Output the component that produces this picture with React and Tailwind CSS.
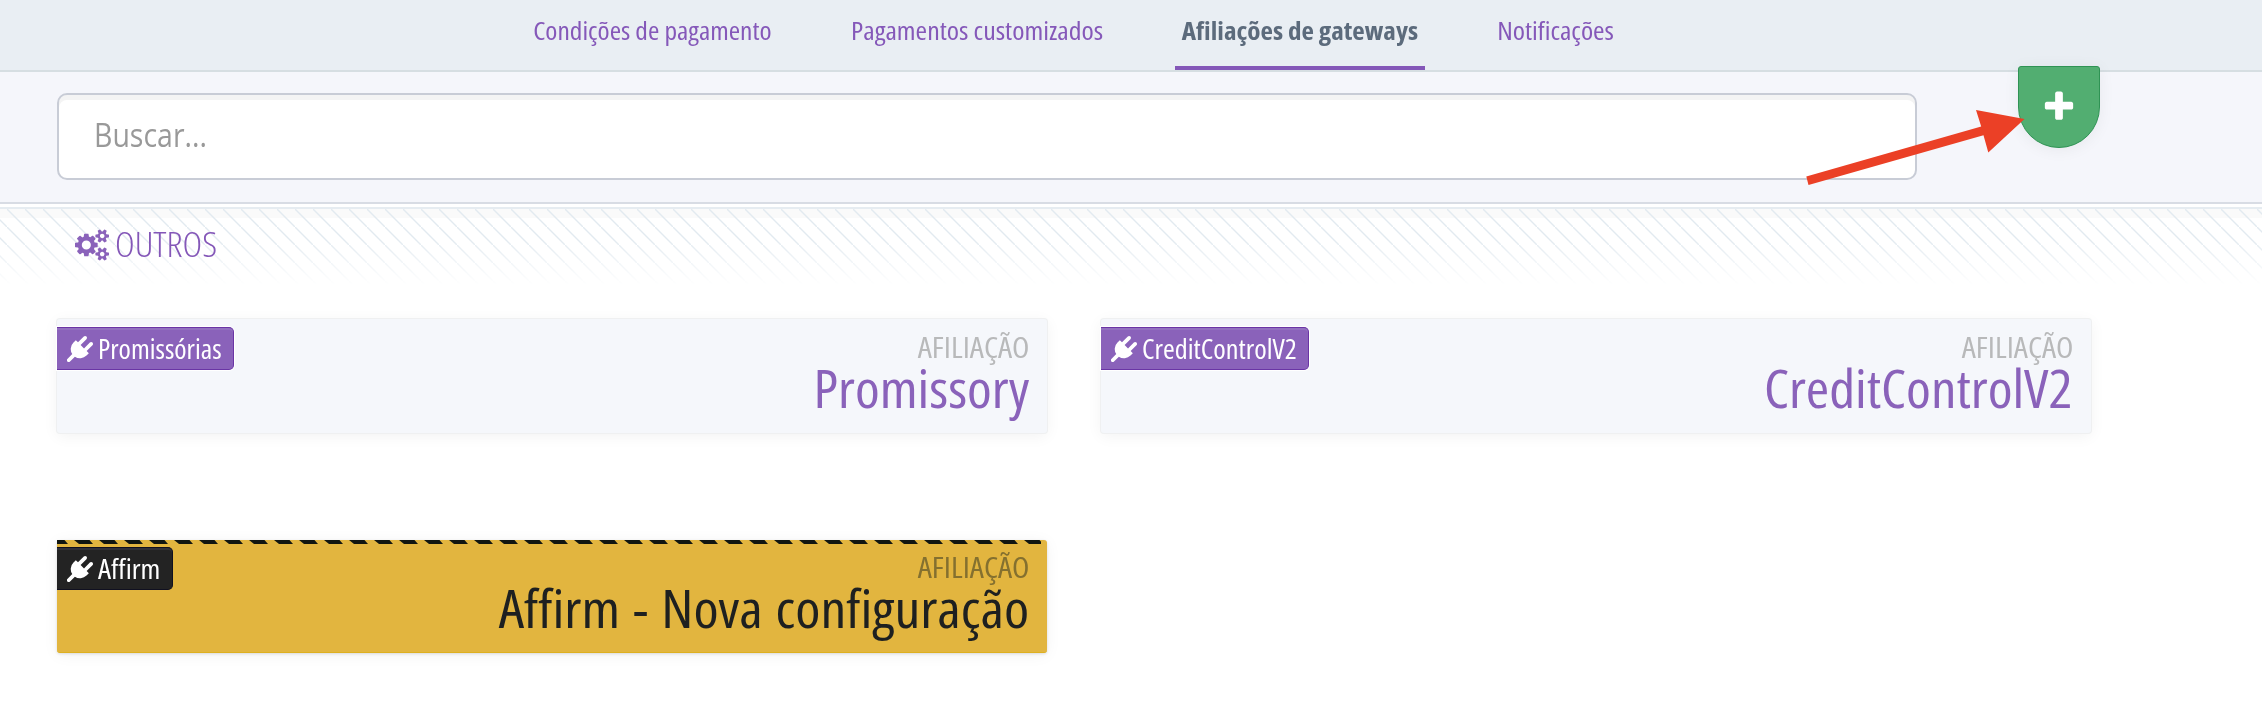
import React from "react";

const PLUG =
  "M1755 453q37 38 37 90.500t-37 90.500l-401 400 150 150-160 160q-163 163-389.500 186.500t-411.500-100.500l-335 335q-38 37-91 37t-90-37-37-90.500 37-90.500l335-335q-124-185-100.500-411.500t186.500-389.500l160-160 150 150 400-401q38-37 91-37t90 37 37 90.500-37 90.500l-400 401 234 234 401-400q38-37 91-37t90 37z";

const COGS =
  "M896 896q0-106-75-181t-181-75-181 75-75 181 75 181 181 75 181-75 75-181zm768 512q0-52-38-90t-90-38-90 38-38 90q0 53 37.500 90.500t90.500 37.500 90.500-37.500 37.500-90.500zm0-1024q0-52-38-90t-90-38-90 38-38 90q0 53 37.500 90.500t90.500 37.500 90.500-37.500 37.500-90.500zm-384 421v185q0 10-7 19.500t-16 10.500l-155 24q-11 35-32 76 34 48 90 115 7 11 7 20 0 12-7 19-23 30-82.500 89.500t-78.500 59.500q-11 0-21-7l-115-90q-37 19-77 31-11 108-23 155-7 24-30 24h-186q-11 0-20-7.500t-10-17.500l-23-153q-34-10-75-31l-118 89q-7 7-20 7-11 0-21-8-144-133-144-160 0-9 7-19 10-14 41-53t47-61q-23-44-35-82l-152-24q-10-1-17-9.500t-7-19.500v-185q0-10 7-19.500t16-10.500l155-24q11-35 32-76-34-48-90-115-7-11-7-20 0-12 7-20 22-30 82-89t79-59q11 0 21 7l115 90q34-18 77-32 11-108 23-154 7-24 30-24h186q11 0 20 7.500t10 17.500l23 153q34 10 75 31l118-89q8-7 20-7 11 0 21 8 144 133 144 160 0 8-7 19-12 16-42 54t-45 60q23 48 34 82l152 23q10 2 17 10.500t7 19.500zm640 533v140q0 16-149 31-12 27-30 52 51 113 51 138 0 4-4 7-122 71-124 71-8 0-46-47t-52-68q-20 2-30 2t-30-2q-14 21-52 68t-46 47q-2 0-124-71-4-3-4-7 0-25 51-138-18-25-30-52-149-15-149-31v-140q0-16 149-31 13-29 30-52-51-113-51-138 0-4 4-7 4-2 35-20t59-34 30-16q8 0 46 46.500t52 67.500q20-2 30-2t30 2q51-71 92-112l6-2q4 0 124 70 4 3 4 7 0 25-51 138 17 23 30 52 149 15 149 31zm0-1024v140q0 16-149 31-12 27-30 52 51 113 51 138 0 4-4 7-122 71-124 71-8 0-46-47t-52-68q-20 2-30 2t-30-2q-14 21-52 68t-46 47q-2 0-124-71-4-3-4-7 0-25 51-138-18-25-30-52-149-15-149-31v-140q0-16 149-31 13-29 30-52-51-113-51-138 0-4 4-7 4-2 35-20t59-34 30-16q8 0 46 46.500t52 67.500q20-2 30-2t30 2q51-71 92-112l6-2q4 0 124 70 4 3 4 7 0 25-51 138 17 23 30 52 149 15 149 31z";

const PLUS =
  "M1600 736v192q0 40-28 68t-68 28h-416v416q0 40-28 68t-68 28h-192q-40 0-68-28t-28-68v-416h-416q-40 0-68-28t-28-68v-192q0-40 28-68t68-28h416v-416q0-40 28-68t68-28h192q40 0 68 28t28 68v416h416q40 0 68 28t28 68z";

const tabs = [
  { label: "Condições de pagamento", cls: "w-[253px]", text: "scale-x-[1.1]" },
  { label: "Pagamentos customizados", cls: "w-[268px]", text: "scale-x-[1.115]" },
  { label: "Afiliações de gateways", cls: "w-[250px]", text: "scale-x-[1.085]", active: true },
  { label: "Notificações", cls: "w-[133px]", text: "scale-x-[1.11]" },
];

function Tabs() {
  return (
    <nav className="flex h-[72px] items-start gap-[64px] border-b-2 border-[#d6dee2] bg-[#e9eef3] pl-[526px]">
      {tabs.map((t) => (
        <a
          key={t.label}
          className={`flex h-[70px] shrink-0 justify-center whitespace-nowrap border-b-4 text-[25px] leading-[60px] ${t.cls} ${
            t.active ? "border-[#8457b8] font-bold text-[#5c6b7c]" : "border-transparent text-[#8558b9]"
          }`}
        >
          <span className={t.text}>{t.label}</span>
        </a>
      ))}
    </nav>
  );
}

function SearchBar() {
  return (
    <div className="flex h-[132px] items-start border-b-2 border-[#d8dce4] bg-[#f5f6fb] pl-[57px]">
      <div className="mt-[21px] flex h-[87px] w-[1860px] items-center rounded-[10px] border-2 border-[#c8ccd6] bg-white pb-[3px] pl-[35px] text-[32px] text-[#999] shadow-[inset_0_5px_0_#f4f4f4] [font-stretch:100%]">
        <span className="origin-left scale-x-[0.89]">Buscar...</span>
      </div>
      <button className="-mt-[6px] ml-[101px] flex h-[82px] w-[82px] items-center justify-center rounded-b-[41px] rounded-t-[3px] border-[1.5px] border-[#2f9354] bg-[#52ae71] pb-px shadow-[0_2px_16px_rgba(0,0,0,0.06)]">
        <svg viewBox="0 0 1792 1792" className="h-9 w-9 shrink-0 fill-white">
          <path d={PLUS} />
        </svg>
      </button>
    </div>
  );
}

function SectionHeader() {
  return (
    <div className="relative mt-[3px] flex h-[78px] items-start border-t-2 border-[#e6ecf1] bg-white shadow-[inset_0_9px_0_#fafafa]">
      <div className="absolute inset-0 bg-[linear-gradient(45deg,transparent_46%,#e2eaf0_48.500%,#e2eaf0_51.500%,transparent_54%)] bg-[length:18px_18px] bg-[position:7px_0] [mask-image:linear-gradient(#000_40%,transparent)]" />
      <h2 className="relative flex h-[70px] items-center pl-[75px] text-[34px] font-light text-[#8457b8]">
        <svg viewBox="0 0 1920 1792" className="mt-[2px] h-8 w-[34px] fill-[#8a62ba]">
          <path d={COGS} />
        </svg>
        <span className="ml-[6px] origin-left scale-x-[1.1]">OUTROS</span>
      </h2>
    </div>
  );
}

function Card({ badge, title, warn, badgeCls, badgeText, titleCls }) {
  return (
    <article
      className={`relative flex items-start justify-between rounded-[3px] pr-[18px] ${
        warn
          ? "h-[113px] border-b border-[#deb020] bg-[#e2b53f] pt-[7px] shadow-[0_1px_3px_rgba(0,0,0,0.12),0_2px_16px_rgba(0,0,0,0.05)]"
          : "h-[114px] bg-[#f5f7fb] pt-2 shadow-[0_0_0_1px_#eff0f1,0_3px_16px_rgba(0,0,0,0.055)]"
      }`}
    >
      {warn && (
        <svg className="absolute left-0 top-0 h-1 w-[984px]">
          <defs>
            <pattern id="hazard" width="25" height="4" patternUnits="userSpaceOnUse" x="-8">
              <path d="M0 0H15.500L19 4H5z" fill="#111611" />
            </pattern>
          </defs>
          <rect width="984" height="4" fill="url(#hazard)" />
        </svg>
      )}
      <span
        className={`flex h-[43px] shrink-0 items-center whitespace-nowrap rounded-r-[5px] border-y-[1.5px] border-r-[1.5px] pl-[10px] text-[27px] text-white ${badgeCls} ${
          warn
            ? "border-[#101020] bg-[#232323] shadow-[inset_0_2px_0_#303036]"
            : "border-[#6a35a5] bg-[#8a62ba] shadow-[inset_0_2px_0_#9270c0,0_0_0_1px_#ffffff]"
        }`}
      >
        <svg viewBox="0 0 1792 1792" className="mr-[5px] h-[26px] w-[26px] shrink-0 fill-white">
          <path d={PLUG} />
        </svg>
        <span className={`origin-left pt-px ${badgeText}`}>{badge}</span>
      </span>
      <div className="flex flex-col items-end whitespace-nowrap">
        <span className={`origin-right scale-x-[1.08] text-[29.5px] font-medium leading-[40px] ${warn ? "text-[#84702f]" : "text-[#b8b9ba]"}`}>
          AFILIAÇÃO
        </span>
        <span className={`origin-right text-[53px] leading-[42px] ${titleCls} ${warn ? "text-[#1e2020]" : "text-[#8a62ba]"}`}>{title}</span>
      </div>
    </article>
  );
}

function Arrow() {
  return (
    <svg className="pointer-events-none absolute left-[1800px] top-[100px] h-[90px] w-[230px]" viewBox="1800 100 230 90">
      <path d="M1806.300 176.500L1981.200 126.500L1976 110L2024.500 119L1988.300 152.500L1983.500 135.300L1808.500 185z" fill="#eb4026" />
    </svg>
  );
}

export default function App() {
  return (
    <div className="relative h-[720px] w-[2262px] overflow-hidden bg-white font-['Open_Sans',sans-serif] [font-stretch:75%] [font-variant-ligatures:none]">
      <Tabs />
      <SearchBar />
      <SectionHeader />
      <main className="mt-[34px] grid grid-cols-[990px_990px] gap-x-[54px] gap-y-[107px] pl-[57px]">
        <Card
          badge="Promissórias"
          title="Promissory"
          badgeCls="w-[177px]"
          badgeText="scale-x-[1.035]"
          titleCls="scale-x-[1.062]"
        />
        <Card
          badge="CreditControlV2"
          title="CreditControlV2"
          badgeCls="w-[208px]"
          badgeText="scale-x-[1.05]"
          titleCls="scale-x-[1.066]"
        />
        <Card
          warn
          badge="Affirm"
          title="Affirm - Nova configuração"
          badgeCls="w-[116px]"
          badgeText="scale-x-[1.09]"
          titleCls="scale-x-[1.08] [word-spacing:2px]"
        />
      </main>
      <Arrow />
    </div>
  );
}
